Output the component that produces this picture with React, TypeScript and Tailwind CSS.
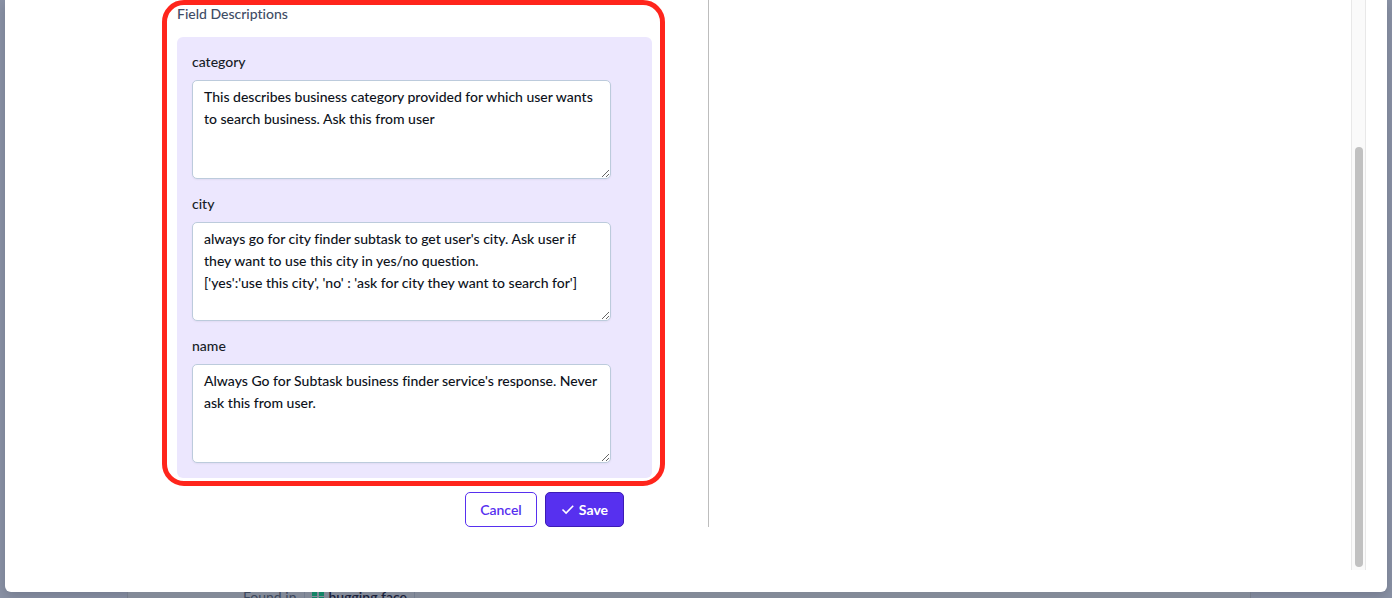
type Field = { id: string; value: string };

const fields: Field[] = [
  {
    id: "category",
    value:
      "This describes business category provided for which user wants to search business. Ask this from user",
  },
  {
    id: "city",
    value:
      "always go for city finder subtask to get user's city. Ask user if they want to use this city in yes/no question.\n['yes':'use this city', 'no' : 'ask for city they want to search for']",
  },
  {
    id: "name",
    value:
      "Always Go for Subtask business finder service's response. Never ask this from user.",
  },
];

function FieldEditor({ id, value }: Field) {
  return (
    <div className="flex flex-col gap-2">
      <label htmlFor={id} className="text-sm leading-5 font-medium text-[#161c27]">
        {id}
      </label>
      <textarea
        id={id}
        defaultValue={value}
        className="block h-[99px] w-full resize rounded-[5px] border border-[#bccbdc] bg-white px-[11px] py-[5px] text-sm leading-[22px] font-medium text-[#0d121b] shadow-xs outline-none [font-variant-ligatures:none]"
      />
    </div>
  );
}

function PageBehind() {
  return (
    <div className="h-1.5 shrink-0 overflow-hidden pr-[141px] pl-[127px]">
      <div className="flex h-6 items-start gap-2 border-x border-[#757c8b] bg-[#838a98] pl-[115px] text-sm leading-2.5 text-[#3c475c]">
        <span>Found in</span>
        <span className="flex items-start gap-1 border-x border-[#747d8e] px-[7px] font-semibold text-[#18203a]">
          <svg width="12" height="12" viewBox="0 0 12 12" fill="#138466" aria-hidden="true">
            <path d="M0 0h5v4H0zM7 0h5v4H7zM0 5h5v5H0zM7 5h5v5H7z" />
          </svg>
          hugging face
        </span>
      </div>
    </div>
  );
}

export default function App() {
  return (
    <div className="flex h-screen flex-col overflow-hidden bg-[#8a92a5] font-['Lato','Liberation_Sans',sans-serif] [font-variant-ligatures:none]">
      <main className="mx-[5px] flex min-h-0 flex-1 rounded-b-md bg-white pr-[21px] pb-[22px] shadow-[0_4px_12px_#747b8e]">
        <div className="grid min-w-0 flex-1 grid-cols-[523fr_477fr] items-start">
          <form className="border-r border-[#bdbdbd] pt-1 pr-14 pl-[172px]" onSubmit={(e) => e.preventDefault()}>
            <section className="relative">
              <h2 className="mb-[13px] text-sm leading-5 font-medium text-[#3f4d66]">Field Descriptions</h2>
              <div className="flex flex-col gap-[15px] rounded-md bg-[#ece7fe] py-[15px] pr-[41px] pl-[15px]">
                {fields.map((field) => (
                  <FieldEditor key={field.id} {...field} />
                ))}
              </div>
              <div className="pointer-events-none absolute -top-1 -right-[13px] -bottom-2 -left-[15px] rounded-[22px] border-[5px] border-[#ff251c]" />
            </section>
            <div className="mt-3.5 flex justify-end gap-2 pr-7 text-sm">
              <button type="button" className="h-[35px] w-[72px] rounded-[5px] border border-[#5730ef] bg-white font-semibold text-[#5730ef]">
                Cancel
              </button>
              <button type="submit" className="flex h-[35px] w-[79px] items-center justify-center gap-1 rounded-[5px] border border-[#3c1bb5] bg-[#5730ef] font-bold text-white">
                <svg width="14" height="14" viewBox="0 0 14 14" fill="none" stroke="currentColor" strokeWidth="1.6" aria-hidden="true">
                  <path d="m1.5 6.5 3.6 3.6L12.2 2.7" />
                </svg>
                Save
              </button>
            </div>
          </form>
        </div>
        <div className="flex w-[15px] flex-col justify-end border-x border-[#e8e8e8] bg-[#fafafa] pr-0.5 pb-[3px] pl-[3px]">
          <div className="h-[74%] rounded-full bg-[#c1c1c1]" />
        </div>
      </main>
      <PageBehind />
    </div>
  );
}
